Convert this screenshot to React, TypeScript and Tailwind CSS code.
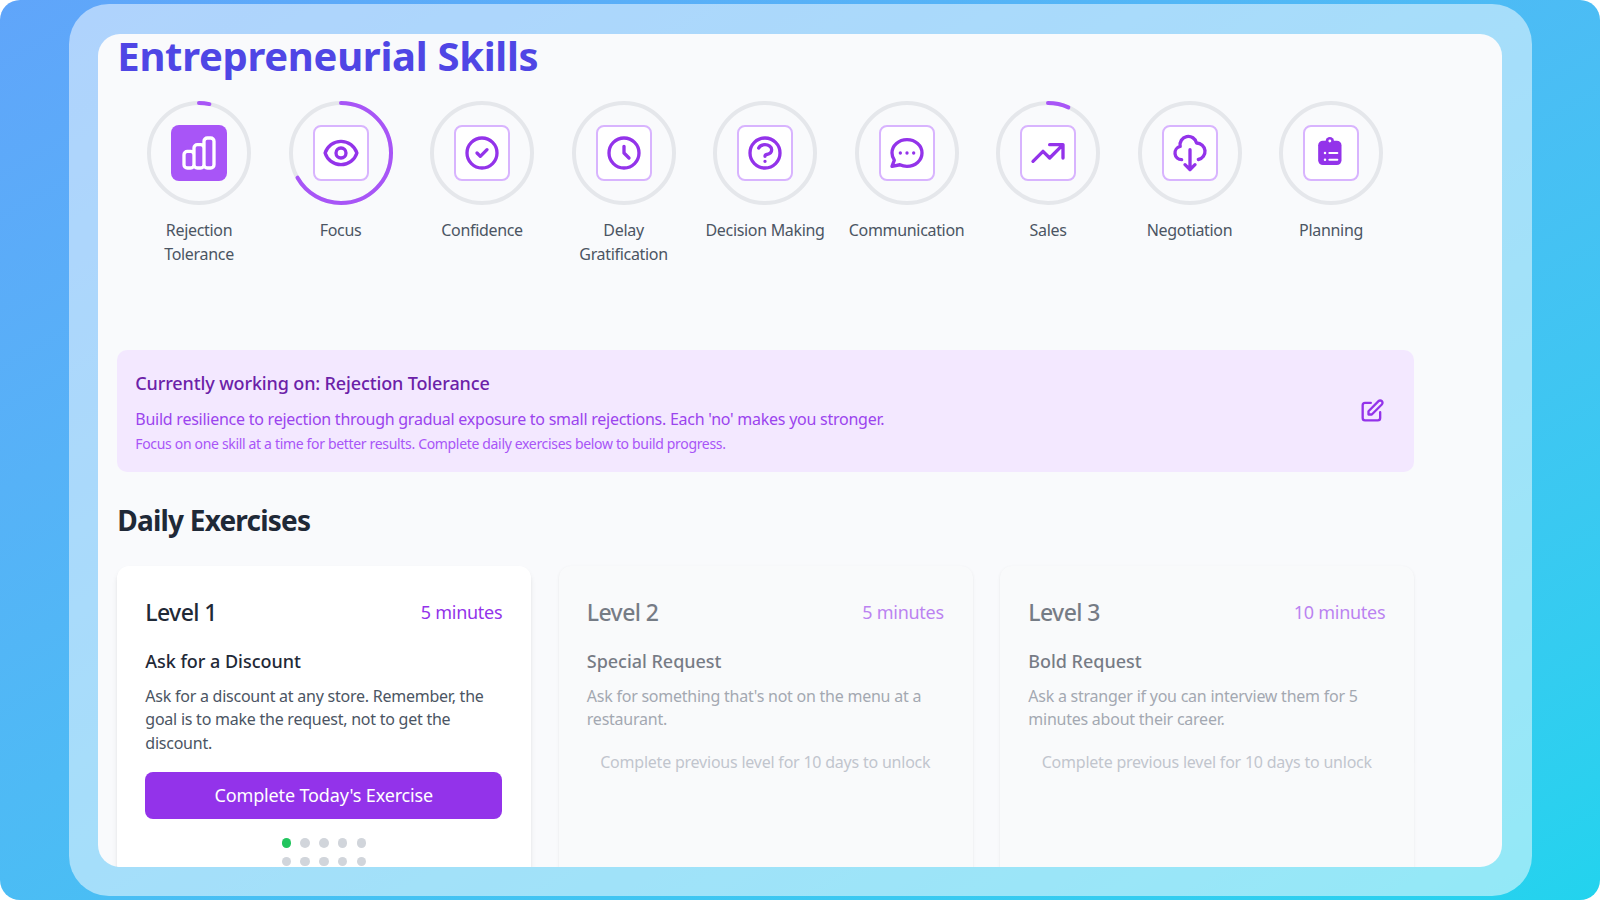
import React from "react";
import {
  HiOutlineChartBar,
  HiOutlineEye,
  HiOutlineCheckCircle,
  HiOutlineClock,
  HiOutlineQuestionMarkCircle,
  HiOutlineChat,
  HiOutlineTrendingUp,
  HiOutlineCloudDownload,
  HiOutlinePencilAlt,
} from "react-icons/hi";

function ClipboardIcon({ size }: { size: number }) {
  return (
    <svg width={size} height={size} viewBox="0 0 24 24" fill="none">
      <rect x="4.3" y="4.6" width="14" height="14.6" rx="2.8" fill="currentColor" />
      <circle cx="11.3" cy="4.9" r="2.5" fill="currentColor" />
      <circle cx="11.3" cy="4.8" r="0.85" fill="#fff" />
      <circle cx="8.4" cy="12" r="0.75" fill="#fff" />
      <circle cx="8.4" cy="16" r="0.75" fill="#fff" />
      <path d="M11 12h4.8M11 16h4.8" stroke="#fff" strokeWidth="1.2" strokeLinecap="round" />
    </svg>
  );
}

const skills = [
  { name: "Rejection Tolerance", Icon: HiOutlineChartBar, progress: 1 / 30, active: true },
  { name: "Focus", Icon: HiOutlineEye, progress: 20 / 30 },
  { name: "Confidence", Icon: HiOutlineCheckCircle, progress: 0 },
  { name: "Delay Gratification", Icon: HiOutlineClock, progress: 0 },
  { name: "Decision Making", Icon: HiOutlineQuestionMarkCircle, progress: 0 },
  { name: "Communication", Icon: HiOutlineChat, progress: 0 },
  { name: "Sales", Icon: HiOutlineTrendingUp, progress: 2 / 30 },
  { name: "Negotiation", Icon: HiOutlineCloudDownload, progress: 0 },
  { name: "Planning", Icon: ClipboardIcon, progress: 0 },
];

function Ring({ progress }: { progress: number }) {
  const r = 50;
  const c = 2 * Math.PI * r;
  return (
    <svg viewBox="0 0 104 104" className="absolute inset-0 w-[104px] h-[104px] -rotate-90">
      <circle cx="52" cy="52" r={r} fill="none" stroke="#e5e7eb" strokeWidth="4" />
      {progress > 0 && (
        <circle
          cx="52"
          cy="52"
          r={r}
          fill="none"
          stroke="#a855f7"
          strokeWidth="4"
          strokeLinecap="round"
          strokeDasharray={`${c * progress} ${c}`}
        />
      )}
    </svg>
  );
}

function Skill({ s }: { s: (typeof skills)[number] }) {
  const { Icon } = s;
  return (
    <div className="w-[125.5px] shrink-0 flex flex-col items-center">
      <div className="relative w-[104px] h-[104px] flex items-center justify-center">
        <Ring progress={s.progress} />
        <div
          className={
            s.active
              ? "w-[56px] h-[56px] rounded-lg bg-[#a855f7] text-white flex items-center justify-center"
              : "w-[56px] h-[56px] rounded-lg bg-white border-2 border-[#d8b4fe] text-[#9333ea] flex items-center justify-center"
          }
        >
          <Icon size={40} />
        </div>
      </div>
      <div className="mt-[13.5px] text-center text-[16px] leading-[24px] text-[#4b5563] tracking-[-0.32px]">{s.name}</div>
    </div>
  );
}

function Card({
  level,
  time,
  title,
  desc,
  locked,
}: {
  level: string;
  time: string;
  title: string;
  desc: string;
  locked?: boolean;
}) {
  return (
    <div
      className={
        locked
          ? "w-[414px] h-[320px] shrink-0 rounded-xl bg-[#f9fafb] shadow-sm pl-7 pr-[29px] pt-[30px] opacity-60"
          : "w-[414px] h-[320px] shrink-0 rounded-xl bg-white shadow-md pl-7 pr-[29px] pt-[30px]"
      }
    >
      <div className="flex items-center justify-between h-8">
        <span className="text-[23px] leading-8 font-medium text-[#1f2937] tracking-[-0.6px]">{level}</span>
        <span className="text-[18px] leading-7 text-[#9333ea] tracking-[-0.28px]">{time}</span>
      </div>
      <div className="mt-[19px] text-[18px] leading-7 font-medium text-[#1f2937] tracking-[-0.03px]">{title}</div>
      <p className={locked ? "mt-[10px] text-[16px] leading-[23.5px] text-[#6b7280] tracking-[-0.24px]" : "mt-[10px] text-[16px] leading-[23.5px] text-[#4b5563] tracking-[-0.24px]"}>{desc}</p>
      {locked ? (
        <div className="mt-[18px] text-center text-[16px] leading-6 text-[#9ca3af] tracking-[-0.22px]">
          Complete previous level for 10 days to unlock
        </div>
      ) : (
        <>
          <button className="mt-[16.5px] w-full h-[47px] rounded-lg bg-[#9333ea] text-white text-[18px] tracking-[-0.15px]">
            Complete Today's Exercise
          </button>
          <div className="mt-[19.5px] mx-auto w-[84.5px] grid grid-cols-5 gap-[9.25px]">
            {Array.from({ length: 10 }).map((_, i) => (
              <span
                key={i}
                className={
                  i === 0
                    ? "w-[9.5px] h-[9.5px] rounded-full bg-[#22c55e]"
                    : "w-[9.5px] h-[9.5px] rounded-full bg-[#d1d5db]"
                }
              />
            ))}
          </div>
        </>
      )}
    </div>
  );
}

export default function App() {
  return (
    <div className="w-[1600px] h-[900px] overflow-hidden bg-white font-['Noto_Sans',sans-serif]">
      <div className="w-[1600px] h-[900px] rounded-[20px] bg-gradient-to-br from-[#60a5fa] to-[#22d3ee] pl-[68.5px] pt-[4px]">
        <div className="w-[1463px] h-[892px] rounded-[40px] bg-white/50 p-[29.5px]">
          <div className="w-full h-full overflow-hidden rounded-[22px] bg-[#f9fafc] pl-[19.3px] pr-[88px]">
            <h1 className="text-[40px] leading-[44px] font-bold text-[#4f46e5] tracking-[-0.3px]">Entrepreneurial Skills</h1>
            <div className="mt-[23px] pl-[19px] flex gap-4 w-[1400px]">
              {skills.map((s) => (
                <Skill key={s.name} s={s} />
              ))}
            </div>
            <div className="mt-[83.5px] h-[122.5px] rounded-[10px] bg-[#f3e8ff] pl-[18px] pr-[28px] pt-[19.5px] flex items-center justify-between">
              <div className="self-start">
                <div className="text-[18px] leading-7 font-medium text-[#6b21a8] tracking-[-0.13px]">
                  Currently working on: Rejection Tolerance
                </div>
                <div className="mt-[10px] text-[16px] leading-6 text-[#9b44ee] tracking-[-0.25px]">
                  Build resilience to rejection through gradual exposure to small rejections. Each 'no' makes you stronger.
                </div>
                <div className="mt-[3px] text-[14px] leading-5 text-[#a855f7] tracking-[-0.33px]">
                  Focus on one skill at a time for better results. Complete daily exercises below to build progress.
                </div>
              </div>
              <HiOutlinePencilAlt size={28} className="text-[#9333ea] -mt-[20px]" />
            </div>
            <h2 className="mt-[29.5px] text-[28px] leading-9 font-bold text-[#1f2937] tracking-[-0.8px]">Daily Exercises</h2>
            <div className="mt-[28px] flex gap-[27.5px]">
              <Card
                level="Level 1"
                time="5 minutes"
                title="Ask for a Discount"
                desc="Ask for a discount at any store. Remember, the goal is to make the request, not to get the discount."
              />
              <Card
                locked
                level="Level 2"
                time="5 minutes"
                title="Special Request"
                desc="Ask for something that's not on the menu at a restaurant."
              />
              <Card
                locked
                level="Level 3"
                time="10 minutes"
                title="Bold Request"
                desc="Ask a stranger if you can interview them for 5 minutes about their career."
              />
            </div>
          </div>
        </div>
      </div>
    </div>
  );
}
